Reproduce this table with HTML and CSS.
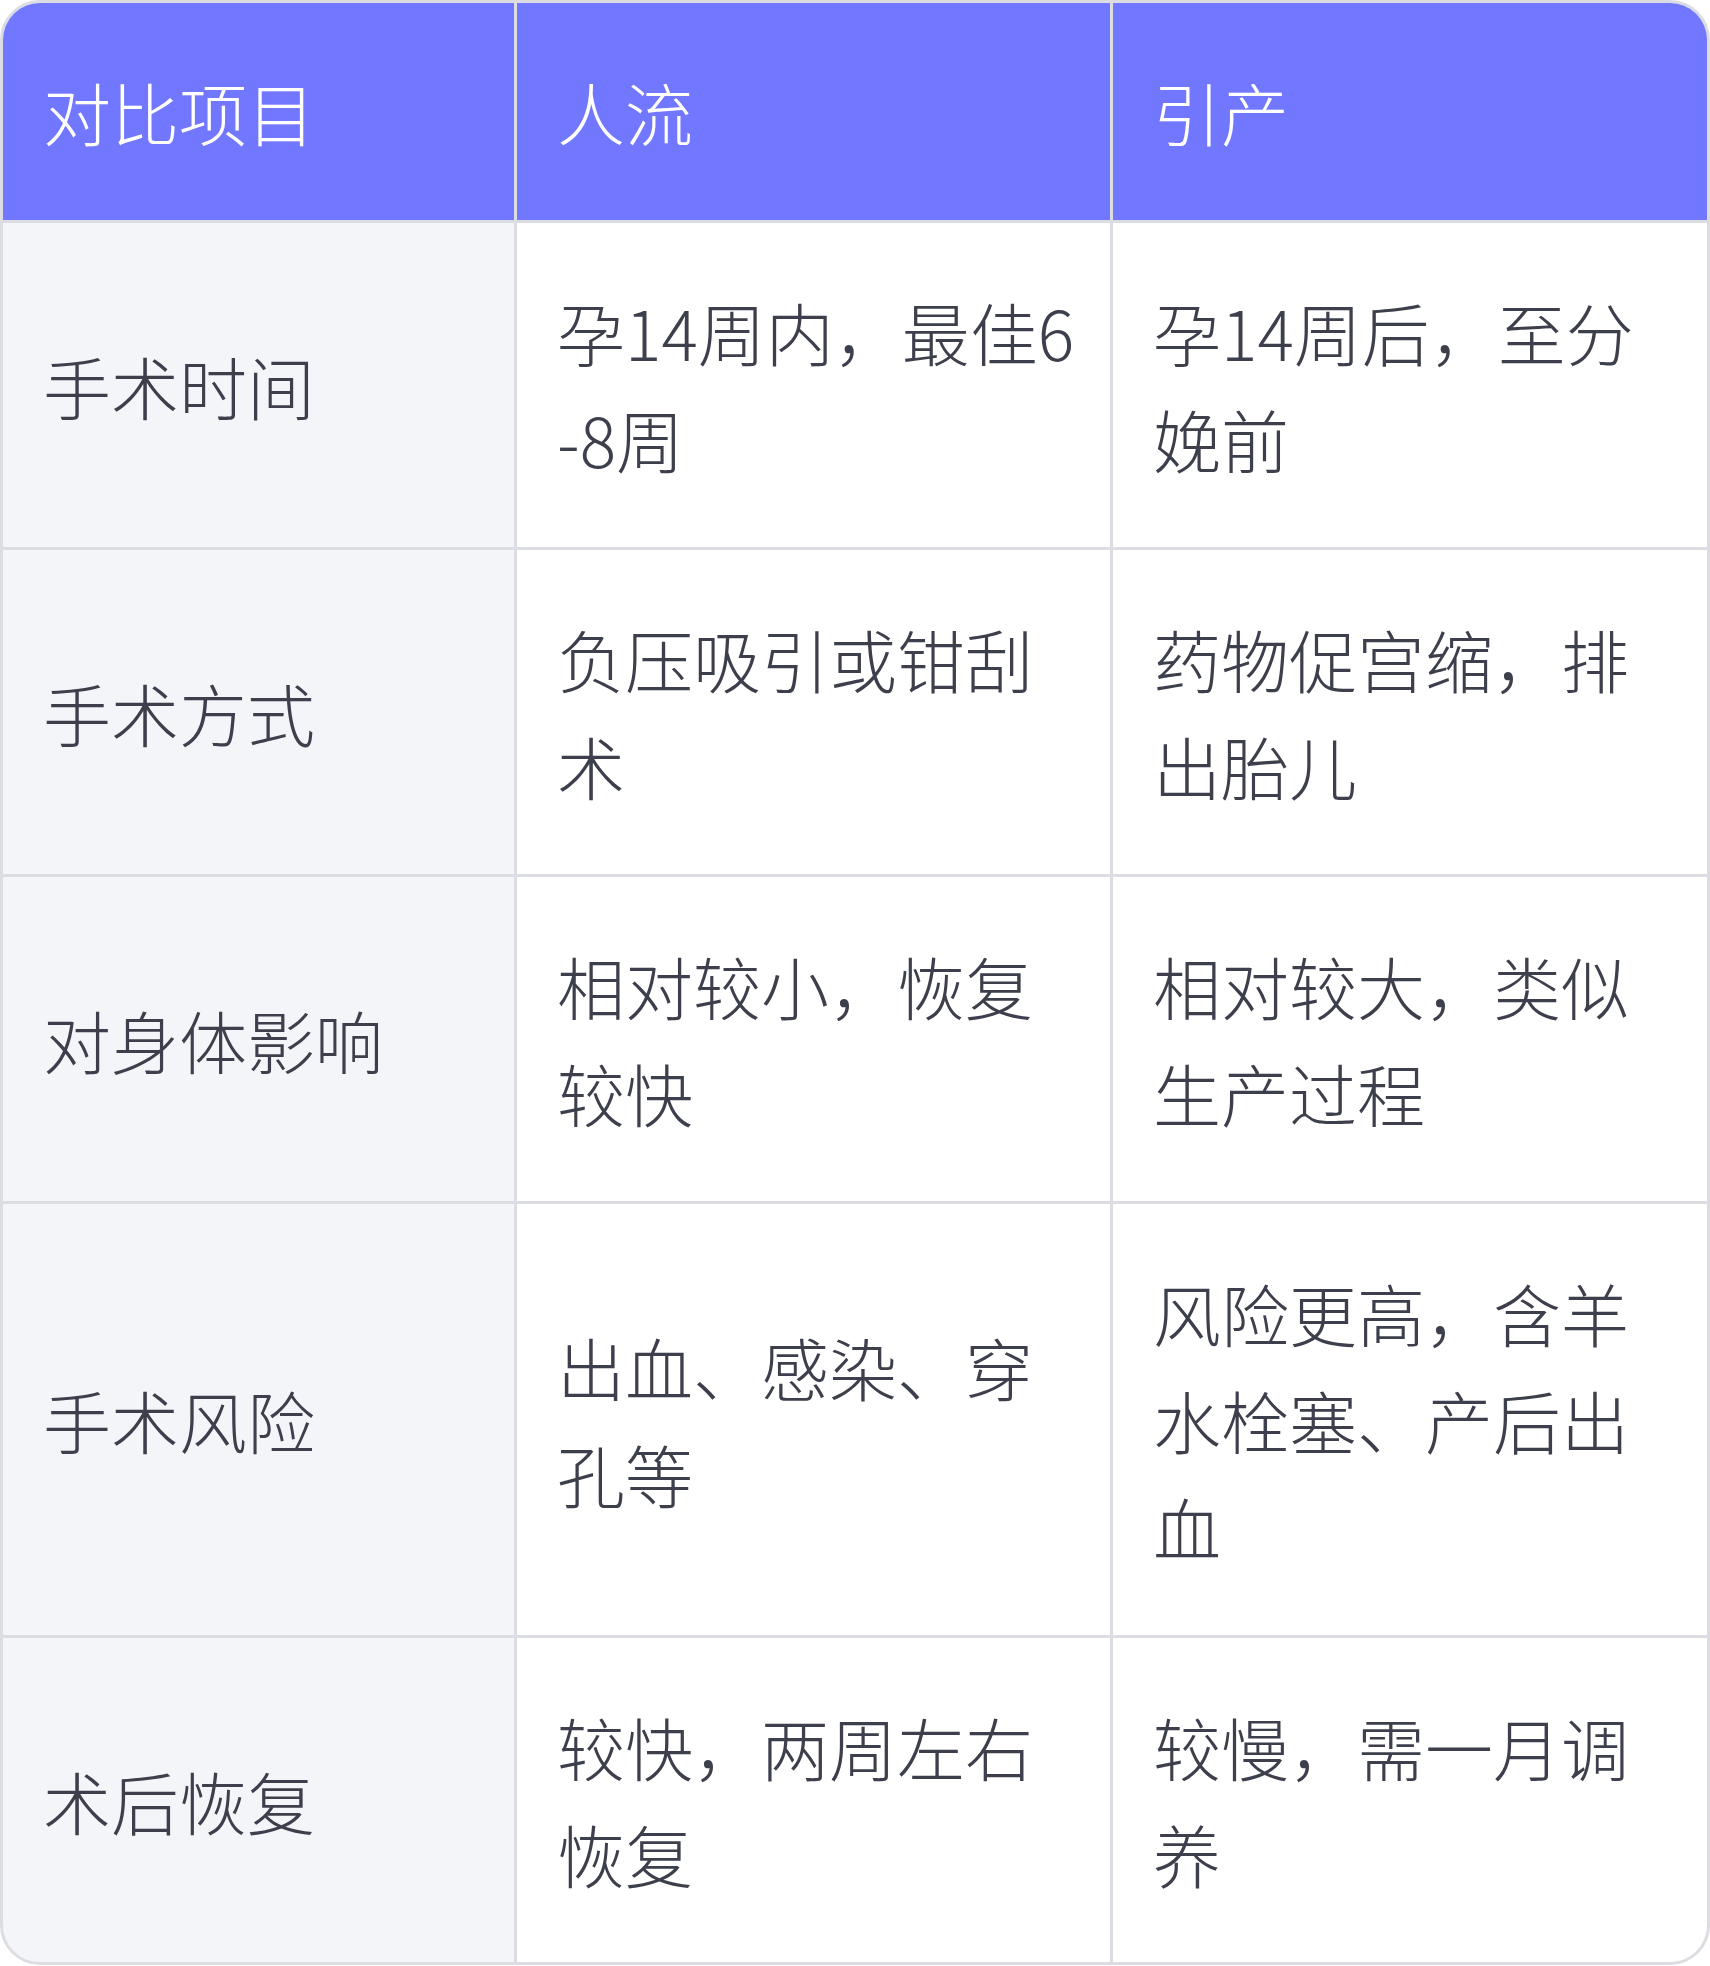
FILE: index.html
```html
<!DOCTYPE html>
<html lang="zh-CN">
<head>
<meta charset="utf-8">
<title>人流与引产对比</title>
<link rel="stylesheet" href="styles.css">
</head>
<body>
<div class="table-wrap">
  <div class="grid">
    <div class="cell head">对比项目</div>
    <div class="cell head">人流</div>
    <div class="cell head">引产</div>

    <div class="cell label">手术时间</div>
    <div class="cell">孕14周内，最佳6-8周</div>
    <div class="cell">孕14周后，至分娩前</div>

    <div class="cell label">手术方式</div>
    <div class="cell">负压吸引或钳刮术</div>
    <div class="cell">药物促宫缩，排出胎儿</div>

    <div class="cell label">对身体影响</div>
    <div class="cell">相对较小，恢复较快</div>
    <div class="cell">相对较大，类似生产过程</div>

    <div class="cell label">手术风险</div>
    <div class="cell">出血、感染、穿孔等</div>
    <div class="cell">风险更高，含羊水栓塞、产后出血</div>

    <div class="cell label">术后恢复</div>
    <div class="cell">较快，两周左右恢复</div>
    <div class="cell">较慢，需一月调养</div>
  </div>
</div>
</body>
</html>
```

FILE: styles.css
```css
html, body {
  margin: 0;
  padding: 0;
  background: #ffffff;
}

.table-wrap {
  width: 1710px;
  box-sizing: border-box;
  border: 3px solid #dcdde3;
  border-radius: 40px;
  overflow: hidden;
  background: #dcdde3;
}

.grid {
  display: grid;
  grid-template-columns: 511px 593px 1fr;
  gap: 3px;
  background: #dcdde3;
}

.cell {
  display: flex;
  flex-direction: column;
  justify-content: center;
  padding: 55px 28px 55px 40px;
  background: #ffffff;
  color: #3d404c;
  font-family: "Noto Sans CJK SC", "Noto Sans", sans-serif;
  font-size: 68px;
  font-weight: 300;
  line-height: 107px;
  word-break: break-all;
}

.cell.head {
  background: #7277ff;
  color: #ffffff;
}

.cell.label {
  background: #f4f5f9;
}
```
